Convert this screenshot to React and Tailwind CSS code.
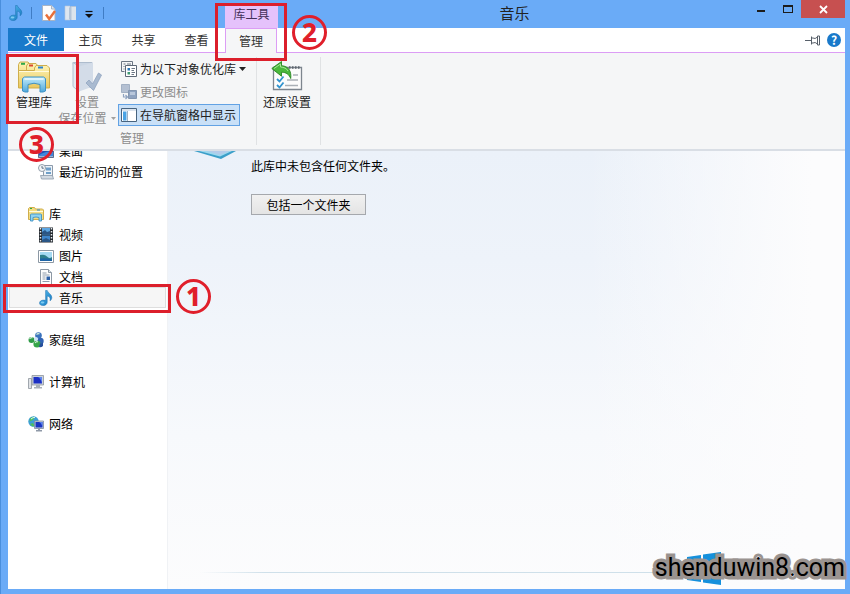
import React, { useState } from 'react';

const MusicIcon = ({ className }) => (
  <svg className={className} viewBox="0 0 16 16">
    <defs>
      <linearGradient id="note" x1="0" y1="0" x2="1" y2="1">
        <stop offset="0" stopColor="#5cc0f0" />
        <stop offset="1" stopColor="#0f74bd" />
      </linearGradient>
    </defs>
    <path d="M7.6 0.4h1.6c.2 2.4 4.6 3.6 4.6 7 0 1.6-.8 2.8-1.8 3.4.9-3.2-.9-4.4-2.8-4.8v6.2c0 2-1.9 3.4-4.3 3.4-2 0-3.4-1-3.4-2.5 0-1.7 1.8-3 4-3 .8 0 1.5.1 2.1.4z" fill="url(#note)" stroke="#1b6fae" strokeWidth=".5" />
    <ellipse cx="4.6" cy="12.4" rx="1.8" ry="1" fill="#8fd6f7" opacity=".8" />
  </svg>
);

const PropertiesIcon = () => (
  <svg className="h-4 w-4" viewBox="0 0 16 16">
    <path d="M1.5.5h9l3.5 3.500v11.500h-12.500z" fill="#fdfdfd" stroke="#a8b4c4" />
    <path d="M10.500.5v3.500h3.500" fill="#dfe6ee" stroke="#a8b4c4" />
    <path d="M5 9.500l3.200 4.500 5.800-8" fill="none" stroke="#e8703a" strokeWidth="2.400" />
  </svg>
);

const NewFolderIcon = () => (
  <svg className="h-4 w-4" viewBox="0 0 16 16">
    <path d="M2 1h5v14h-5z" fill="#dde6f0" stroke="#b9c8da" strokeWidth=".6" />
    <path d="M6 3l2-2h5v14h-5l-2-1z" fill="#b3c4d8" />
    <path d="M8.500 2h4.500v13h-4.500z" fill="#dce4ec" />
  </svg>
);

const LibraryIcon = ({ className }) => (
  <svg className={className} viewBox="0 0 34 32">
    <defs>
      <linearGradient id="folder" x1="0" y1="0" x2="0" y2="1">
        <stop offset="0" stopColor="#fdf3b4" />
        <stop offset="1" stopColor="#e9c75c" />
      </linearGradient>
      <linearGradient id="stand" x1="0" y1="0" x2="0" y2="1">
        <stop offset="0" stopColor="#c4ecfb" />
        <stop offset="1" stopColor="#4fa9dc" />
      </linearGradient>
    </defs>
    <path d="M1.500 3.500l1.500-2.500h8l2 2.500 1 22h-12.500z" fill="url(#folder)" stroke="#cfae4c" />
    <path d="M9.500 5l1.500-2.500h8l2 2.500v19h-11.500z" fill="url(#folder)" stroke="#cfae4c" />
    <path d="M17.500 7l1.500-2.500h11l2.500 2.500v20h-31v-17.500h16z" fill="url(#folder)" stroke="#cfae4c" />
    <path d="M4 1.800h4v2h-4z" fill="#2fa84a" />
    <path d="M12 3.500h4v2h-4z" fill="#d9482f" />
    <path d="M21 5.500h5v2h-5z" fill="#2d84d0" />
    <path d="M2 10.500h30" stroke="#fffbe0" />
    <path d="M5.500 17.500l2-1.500h19l2 1.500v12.500l-2.500 1h-3v-7.500q-6-2.500-12 0v7.500h-3l-2.500-1z" fill="url(#stand)" stroke="#3f92c4" />
    <path d="M7.500 18h19" stroke="#eefaff" strokeWidth="1.500" />
  </svg>
);

const SaveLocationIcon = () => (
  <svg className="h-8 w-[30px]" viewBox="0 0 30 32">
    <path d="M1 1.500h19v25h-14z" fill="#cbd6e4" stroke="#aebccd" />
    <path d="M1 1.500l6 4v25l-6-5z" fill="#e4eaf2" stroke="#b3c0d0" />
    <path d="M7 5.500l14-4v24l-14 5z" fill="#d3dce8" />
    <path d="M14 22l3-3 3.500 4 6-11 3 2-8 15.500z" fill="#a9bad0" stroke="#90a5c0" strokeWidth=".8" />
  </svg>
);

const OptimizeIcon = () => (
  <svg className="h-4 w-4 shrink-0" viewBox="0 0 16 16">
    <path d="M.5.500h11v4M.5.500v10h3M2.500 3h2M6 3h4M2.500 5.500h1M2.500 8h1" fill="none" stroke="#6b7684" />
    <path d="M4.500 4.500h11v11h-11z" fill="#fff" stroke="#5d6876" />
    <path d="M6.500 7h2.500v2.500h-2.500z" fill="#2b76b8" />
    <path d="M6.500 11h2.500v2.500h-2.500z" fill="#3f9a72" />
    <path d="M10.500 7.500h3.500M10.500 9.500h2.500M10.500 11.500h3.500M10.500 13.500h2.500" stroke="#6b7684" />
  </svg>
);

const ChangeIconIcon = () => (
  <svg className="h-4 w-4 shrink-0" viewBox="0 0 16 16">
    <path d="M.5.500h8v8h-8z" fill="#b4c0d2" stroke="#a3b1c4" />
    <path d="M7.500 6.500h8v8h-8z" fill="#8fa3c0" stroke="#8496b0" />
    <path d="M9 8h5v3h-5z" fill="#b9c7db" />
    <path d="M2.500 10v3h4M4.500 11l2 2-2 2" fill="none" stroke="#8fa3c0" strokeWidth="1.200" />
  </svg>
);

const PaneIcon = () => (
  <svg className="h-4 w-4 shrink-0" viewBox="0 0 16 16">
    <path d="M.5 1.500h15v13h-15z" fill="#fff" stroke="#47637f" />
    <path d="M1 2h14v2h-14z" fill="#dbe4ee" />
    <path d="M2 4.500h3.500v9h-3.500z" fill="#4aa3e4" />
    <path d="M6.500 4v10" stroke="#9db1c5" />
  </svg>
);

const RestoreIcon = () => (
  <svg className="h-8 w-8" viewBox="0 0 32 32">
    <path d="M2.500 6.500h28v22h-28z" fill="#fcfcfc" stroke="#7d858e" strokeWidth="1.300" />
    <path d="M18 6.500h12" stroke="#5f666e" strokeWidth="2.500" strokeDasharray="1.500 1.500" />
    <path d="M22 14h5M16 19h11M14 24.500h13" stroke="#aab0b6" strokeWidth="1.500" />
    <path d="M6 18l2.500 2.500 4-5M6 24l2.500 2.500 4-5" fill="none" stroke="#3093cf" strokeWidth="1.800" />
    <path d="M.8 7.500l9.700-7v4.200c6.500.3 10.200 5 9.200 12.800-1.500-4-4.500-6.300-9.200-6.300v4z" fill="#4bb83c" stroke="#26851f" strokeWidth=".9" />
    <path d="M3 7.500l6.500-4.500v3c3.500.2 6 1.400 7.500 4" fill="none" stroke="#a4e694" />
  </svg>
);

const DesktopIcon = () => (
  <svg className="h-4 w-4" viewBox="0 0 16 16">
    <path d="M.5 1.500h15v13h-15z" fill="#1f4fae" stroke="#5b6f92" />
    <path d="M1 12q8-5 14-3v4h-14z" fill="#3f86dc" />
    <path d="M1 13.500h14" stroke="#9db4cf" />
  </svg>
);

const RecentIcon = () => (
  <svg className="h-4 w-4" viewBox="0 0 16 16">
    <path d="M5.500 1.500h9v11h-9z" fill="#eef3f8" stroke="#8c9aaa" />
    <path d="M8 3.500h5v3h-5zM8 8h5v2h-5z" fill="#6f9fc8" />
    <path d="M2.500 11.500h12l1 3.500h-12z" fill="#d3dae2" stroke="#8c9aaa" strokeWidth=".8" />
    <circle cx="4" cy="4" r="3.500" fill="#f4f6f8" stroke="#929eab" />
    <path d="M4 2v2.200h1.800" fill="none" stroke="#4d6278" strokeWidth=".9" />
  </svg>
);

const VideoIcon = () => (
  <svg className="h-4 w-4" viewBox="0 0 16 16">
    <path d="M1 .5h14v15h-14z" fill="#23282e" />
    <path d="M4 1h8v6.500h-8z" fill="#5ba6e4" />
    <path d="M4 8.500h8v6.500h-8z" fill="#3f86cc" />
    <path d="M4 5l3-2 2 2 3-1v3.500h-8zM4 13l4-2 4 2v2h-8z" fill="#2a5686" />
    <path d="M2.500 1v14M13.500 1v14" stroke="#e6ebf0" strokeWidth="1.500" strokeDasharray="1.500 1.500" />
  </svg>
);

const PictureIcon = () => (
  <svg className="h-4 w-4" viewBox="0 0 16 16">
    <path d="M.5 2.500h15v12h-15z" fill="#fff" stroke="#8c98a4" />
    <path d="M2 4h12v9h-12z" fill="#a5daf3" />
    <path d="M2 7q5-1 7 1.500t5 .5v4h-12z" fill="#2e7f8c" />
    <path d="M2 10.500q6-1 12 1v1.500h-12z" fill="#1d64a6" />
  </svg>
);

const DocumentIcon = () => (
  <svg className="h-4 w-4" viewBox="0 0 16 16">
    <path d="M2.500.5h8l3 3v12h-11z" fill="#fdfdfd" stroke="#8d98a4" />
    <path d="M10.500.5v3h3" fill="#dfe5eb" stroke="#8d98a4" />
    <path d="M4.500 4h4M4.500 6h7M4.500 8h3M4.500 10h3M4.500 12.500h7" stroke="#8f9cab" />
    <path d="M8.500 7.500h3.500v3.500h-3.500z" fill="#2c61a8" />
  </svg>
);

const HomegroupIcon = () => (
  <svg className="h-4 w-4" viewBox="0 0 16 16">
    <circle cx="3.500" cy="8" r="3" fill="#2f9b47" />
    <circle cx="10.500" cy="3.500" r="3.300" fill="#3b73bd" />
    <circle cx="12.500" cy="9" r="3.200" fill="#3264b4" />
    <circle cx="9" cy="12" r="3.600" fill="#36a548" />
    <circle cx="8" cy="7" r="2" fill="#cbe2f5" />
    <path d="M1.500 7q1.500-2 3-1M8.500 2.500q1.500-1.500 3-.5M7 11q1.500-2 3-1" fill="none" stroke="#d5f2da" strokeWidth="1.100" />
    <path d="M12 11.500q2 .5 3-1.500v4q-2 2-4 1z" fill="#27509c" />
  </svg>
);

const ComputerIcon = () => (
  <svg className="h-4 w-4" viewBox="0 0 16 16">
    <path d="M.5 4.500h3v10h-3z" fill="#dfe2e6" stroke="#8d949c" strokeWidth=".8" />
    <path d="M4 1.500h11.500v9.500h-11.500z" fill="#ccd2da" stroke="#8d949c" strokeWidth=".8" />
    <path d="M5.500 3h8.500v6.500h-8.500z" fill="#1c2fc4" />
    <path d="M10 3h4v6.500q-1-5-4-6.500z" fill="#5c83ee" />
    <path d="M8 11h4v2h2v1.500h-8v-1.500h2z" fill="#a9b0b8" />
  </svg>
);

const NetworkIcon = () => (
  <svg className="h-4 w-4" viewBox="0 0 16 16">
    <circle cx="5.500" cy="5.500" r="5.200" fill="#3d9fd6" />
    <path d="M2 2.500q3-2.500 5-1.500l-2 3-3.500 1.500zM2 8l3-1 1.500 3-2 .5z" fill="#4fbf5c" />
    <path d="M3 3q2-2 4-1.500" fill="none" stroke="#d4f3f8" />
    <path d="M6.500 5h9v7.500h-9z" fill="#ccd4de" stroke="#7e8ba0" strokeWidth=".8" />
    <path d="M7.500 6h7v5.500h-7z" fill="#1b35c0" />
    <path d="M11 6h3.500v5q-1-4-3.500-5z" fill="#5b84ee" />
    <path d="M10 12.500h2v1.500h2v1.500h-6v-1.500h2z" fill="#8f99a8" />
  </svg>
);

const LibrarySmallIcon = () => (
  <svg className="h-4 w-4" viewBox="0 0 16 16">
    <path d="M.5 2.500l1-1h5l1 1.500h7l1 1v9.500h-15z" fill="#f3dc82" stroke="#cfae4c" />
    <path d="M2 2.500h2" stroke="#2fa84a" />
    <path d="M9 4h3" stroke="#2d84d0" />
    <path d="M1 5.500h14" stroke="#fffbe0" />
    <path d="M2.500 8.500l1-.5h9l1 .5v6.500h-2.500v-3.500q-3-1-6 0v3.500h-2.500z" fill="#8fd3f2" stroke="#3f92c4" strokeWidth=".9" />
  </svg>
);

const MusicSmallIcon = () => <MusicIcon className="h-4 w-4" />;

const navItems = [
  { label: '桌面', icon: DesktopIcon, child: true },
  { label: '最近访问的位置', icon: RecentIcon, child: true },
  null,
  { label: '库', icon: LibrarySmallIcon },
  { label: '视频', icon: VideoIcon, child: true },
  { label: '图片', icon: PictureIcon, child: true },
  { label: '文档', icon: DocumentIcon, child: true },
  { label: '音乐', icon: MusicSmallIcon, child: true },
  null,
  { label: '家庭组', icon: HomegroupIcon },
  null,
  { label: '计算机', icon: ComputerIcon },
  null,
  { label: '网络', icon: NetworkIcon },
];

const TitleBar = () => (
  <header className="flex h-7 shrink-0 items-start">
    <div className="flex h-[26px] w-[217px] items-center">
      <MusicIcon className="h-4 w-4" />
      <span className="ml-[7px] h-3 w-px bg-[#3f7cc4]" />
      <button aria-label="属性" className="ml-[9px]"><PropertiesIcon /></button>
      <button aria-label="新建文件夹" className="ml-[6px]"><NewFolderIcon /></button>
      <button aria-label="自定义快速访问工具栏" className="ml-1">
        <svg className="h-4 w-3" viewBox="0 0 12 16">
          <path d="M2.500 6.500h7" stroke="#111" strokeWidth="1.200" />
          <path d="M2 9h8l-4 4z" fill="#111" />
        </svg>
      </button>
      <span className="ml-2 h-3 w-px bg-[#3f7cc4]" />
    </div>
    <div className="mt-[3px] flex h-[25px] w-[53px] items-center justify-center bg-[#e5c2fb] pb-[3px] text-[#44305a]">
      库工具
    </div>
    <h1 className="flex h-[26px] flex-1 items-center justify-center pl-1 text-[15px] text-[#222]">音乐</h1>
    <button aria-label="最小化" className="flex h-[18px] w-[27px] items-center justify-center">
      <span className="mt-1 h-[2px] w-2 bg-[#1c1c1c]" />
    </button>
    <button aria-label="最大化" className="flex h-[18px] w-[27px] items-center justify-center">
      <span className="h-2 w-[10px] border border-t-2 border-[#1c1c1c]" />
    </button>
    <button aria-label="关闭" className="flex h-[18px] w-11 items-center justify-center bg-[#c75050]">
      <svg className="h-[9px] w-[9px]" viewBox="0 0 9 9">
        <path d="M1 1l7 7M8 1l-7 7" stroke="#fff" strokeWidth="1.800" />
      </svg>
    </button>
  </header>
);

const TabBar = () => (
  <nav className="flex h-6 shrink-0 bg-white text-[#333]">
    <button className="h-[23px] w-14 bg-[#1979ca] text-white">文件</button>
    <button className="h-6 w-[53px]">主页</button>
    <button className="h-6 w-[53px]">共享</button>
    <button className="h-6 w-[53px]">查看</button>
    <button className="z-10 ml-[2px] h-[25px] w-[52px] border-x border-t border-[#dc9df5] bg-[#f5f6f7]">管理</button>
    <div className="flex flex-1 items-center justify-end gap-[6px] pr-1">
      <button aria-label="固定功能区">
        <svg className="h-[11px] w-4" viewBox="0 0 16 11">
          <path d="M0 5.500h6M6.500 1.500v8M6.500 3h1.500q2 1.500 4.500-1M6.500 8h1.500q2-1.500 4.500 1M12.500 1h2v9h-2z" fill="none" stroke="#58606a" />
        </svg>
      </button>
      <button aria-label="帮助" className="flex h-[14px] w-[14px] items-center justify-center rounded-full bg-[#1979ca] text-xs font-bold text-white">
        ?
      </button>
    </div>
  </nav>
);

const Ribbon = () => {
  const [showInPane, setShowInPane] = useState(true);

  return (
    <div className="flex h-[99px] shrink-0 border-b-2 border-[#d9dee5] border-t border-t-[#dc9df5] bg-[#f5f6f7]">
      <section className="my-1 flex w-[249px] flex-col border-r border-[#e0e2e4]">
        <div className="flex flex-1">
          <button className="flex w-[52px] flex-col items-center pt-1 text-[#222]">
            <LibraryIcon className="h-8 w-[34px]" />
            <span className="leading-[18px]">管理库</span>
          </button>
          <button className="flex w-[58px] flex-col items-center pt-1 pr-1 text-[#8d8d8d]" disabled>
            <SaveLocationIcon />
            <span className="leading-[18px]">设置</span>
            <span className="flex items-center gap-1 leading-[14px] whitespace-nowrap">
              保存位置
              <svg className="h-[3px] w-[5px]" viewBox="0 0 5 3"><path d="M0 0h5l-2.500 3z" fill="#a0a0a0" /></svg>
            </span>
          </button>
          <div className="flex flex-col gap-px pt-px">
            <button className="flex h-[22px] items-center gap-[3px] px-[3px] text-[#222]">
              <OptimizeIcon />
              为以下对象优化库
              <svg className="h-1 w-[7px]" viewBox="0 0 7 4"><path d="M0 0h7l-3.500 4z" fill="#222" /></svg>
            </button>
            <button className="flex h-[22px] items-center gap-[3px] px-[3px] text-[#8d8d8d]" disabled>
              <ChangeIconIcon />
              更改图标
            </button>
            <button
              onClick={() => setShowInPane(!showInPane)}
              aria-pressed={showInPane}
              className={`flex h-[22px] w-[122px] items-center gap-[3px] border px-[2px] text-[#222] ${
                showInPane ? 'border-[#62a2e4] bg-[#c9e0f7]' : 'border-transparent'
              }`}
            >
              <PaneIcon />
              在导航窗格中显示
            </button>
          </div>
        </div>
        <div className="h-[15px] text-center leading-[15px] text-[#8d8d8d]">管理</div>
      </section>
      <section className="my-1 flex w-16 justify-center border-r border-[#e0e2e4] pr-[3px]">
        <button className="flex flex-col items-center self-start pt-1 text-[#222]">
          <RestoreIcon />
          <span className="leading-[18px]">还原设置</span>
        </button>
      </section>
    </div>
  );
};

const NavigationPane = () => {
  const [selected, setSelected] = useState('音乐');

  return (
    <aside className="w-40 shrink-0 overflow-hidden border-r border-[#f0f2f5] bg-white">
      {/* list is scrolled by half a row */}
      <ul className="-mt-[11px]">
        {navItems.map((item, index) =>
          item === null ? (
            <li key={index} className="h-[21px]" />
          ) : (
            <li key={index} className="h-[21px] px-px">
              <button
                onClick={() => setSelected(item.label)}
                className={`flex h-[21px] w-full items-center gap-[5px] border text-black ${
                  item.child ? 'pl-7' : 'pl-[18px]'
                } ${selected === item.label ? 'border-[#dedede] bg-[#f6f6f6]' : 'border-transparent'}`}
              >
                <item.icon />
                {item.label}
              </button>
            </li>
          )
        )}
      </ul>
    </aside>
  );
};

const Content = () => (
  <main className="relative flex-1 bg-[linear-gradient(to_right,transparent_62%,#fcfcfd_95%),linear-gradient(to_bottom,#ebf1f9,#eef3fa_25%,#f7f9fc_65%,#fcfcfd)]">
    <div className="flex items-start pl-[26px]">
      <svg className="h-2 w-[42px]" viewBox="0 0 42 8">
        <path d="M0 0h42l-15 8z" fill="#3b9fc9" />
        <path d="M5 0h33l-12 5.500z" fill="#9ed8ee" />
        <path d="M13 0h22l-9 4z" fill="#b3cbe9" />
      </svg>
      <div className="ml-[15px] pt-[6px] text-black">
        <p className="leading-[18px]">此库中未包含任何文件夹。</p>
        <button className="mt-[19px] h-[21px] w-[115px] border border-[#a5a8ad] bg-linear-to-b from-[#f1f1f1] to-[#e4e4e4]">
          包括一个文件夹
        </button>
      </div>
    </div>
    <div className="absolute right-0 bottom-4 left-8 h-px bg-linear-to-r from-transparent via-[#cfe0ea] via-10% to-[#cfe0ea]" />
  </main>
);

const Watermark = () => (
  <div className="absolute right-[5px] bottom-[6px] flex h-10 items-center">
    <svg className="absolute left-8 h-[33px] w-[34px]" viewBox="0 0 34 33">
      <path d="M0 5l14-2v13h-14zM16 2.500l18-2.500v16h-18zM0 17.500h14v12.500l-14-2zM16 17.500h18v15.500l-18-2.500z" fill="#1590dc" />
    </svg>
    <span className="relative font-['Roboto',sans-serif] text-[25px] leading-10 text-black [-webkit-text-stroke:7px_#9a9390] [paint-order:stroke_fill]">
      shenduwin8.com
    </span>
  </div>
);

const Marker = ({ number, className }) => (
  <span
    className={`absolute flex h-[35px] w-[35px] items-center justify-center rounded-full border-[3px] border-[#e01f2b] pb-[2px] font-['Noto_Sans',sans-serif] text-[26px] leading-none font-extrabold text-[#e01f2b] ${className}`}
  >
    {number}
  </span>
);

const App = () => {
  return (
    <div className="relative flex h-screen flex-col overflow-hidden border-l border-[#4a8fdd] bg-[#6aabf7] pr-[5px] pb-[5px] pl-[7px] font-['Noto_Sans_CJK_SC',sans-serif] text-xs">
      <TitleBar />
      <TabBar />
      <Ribbon />
      <div className="flex min-h-0 flex-1">
        <NavigationPane />
        <Content />
      </div>

      <Watermark />

      {/* step callouts */}
      <span className="absolute top-[284px] left-[2px] h-[29px] w-[168px] border-[3px] border-[#dc1f2b]" />
      <Marker number="1" className="top-[279px] left-[175px]" />
      <span className="absolute top-[3px] left-[214px] z-20 h-[58px] w-[72px] border-[3px] border-[#dc1f2b]" />
      <Marker number="2" className="top-[15px] left-[291px]" />
      <span className="absolute top-[54px] left-[5px] h-[70px] w-[73px] border-[3px] border-[#dc1f2b]" />
      <Marker number="3" className="top-[127px] left-[18px]" />
    </div>
  );
};

export default App;
